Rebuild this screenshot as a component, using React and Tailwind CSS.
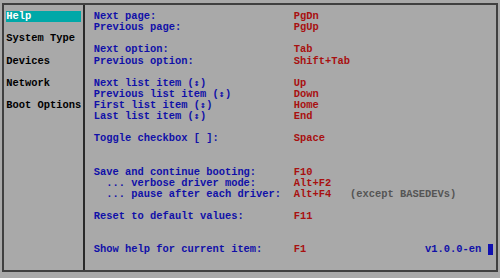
import React from 'react';

const menu = ['Help', '', 'System Type', '', 'Devices', '', 'Network', '', 'Boot Options'];

// each entry is one text row of the help screen (rows 1..21)
const rows = [
  ['Next page:', 'PgDn'],
  ['Previous page:', 'PgUp'],
  null,
  ['Next option:', 'Tab'],
  ['Previous option:', 'Shift+Tab'],
  null,
  ['Next list item (↕)', 'Up'],
  ['Previous list item (↕)', 'Down'],
  ['First list item (↕)', 'Home'],
  ['Last list item (↕)', 'End'],
  null,
  ['Toggle checkbox [ ]:', 'Space'],
  null,
  null,
  ['Save and continue booting:', 'F10'],
  ['  ... verbose driver mode:', 'Alt+F2'],
  ['  ... pause after each driver:', 'Alt+F4', '(except BASEDEVs)'],
  null,
  ['Reset to default values:', 'F11'],
  null,
  null,
];

const Label = ({ text }) => {
  const parts = text.split('↕');
  return (
    <span className="w-[200px] text-[#1010a8]">
      {parts.map((p, i) => (
        <React.Fragment key={i}>
          {p}
          {i < parts.length - 1 && (
            <span className="inline-block align-top w-[6.25px] h-[11.12px] overflow-hidden text-center font-['DejaVu_Sans_Mono',monospace] text-[9.5px] leading-[10.4px]">↕</span>
          )}
        </React.Fragment>
      ))}
    </span>
  );
};

const App = () => {
  return (
    <div className="w-[500px] h-[278px] bg-[#a9a9a9] pt-[3px] pl-[2px] pr-[2px] pb-[6.5px] font-['Liberation_Mono','DejaVu_Sans_Mono',monospace] font-bold text-[10.42px] leading-[11.12px] whitespace-pre">
      <div className="h-full flex border-2 border-[#404040]">
        {/* Sidebar */}
        <div className="w-[79px] pt-[6.12px] pl-[2.25px] text-black">
          {menu.map((item, i) => (
            <div
              key={i}
              className={`h-[11.12px] w-[75px] ${i === 0 ? 'bg-[#00a8a8] text-white' : ''}`}
            >
              {item}
            </div>
          ))}
        </div>

        <div className="w-[2px] bg-[#2a2a2a]" />

        {/* Help content */}
        <div className="flex-1 pt-[6.12px] pl-[8.75px]">
          {rows.map((row, i) => (
            <div key={i} className="h-[11.12px] flex">
              {row && (
                <>
                  <Label text={row[0]} />
                  <span className="w-[56.25px] text-[#a81010]">{row[1]}</span>
                  {row[2] && <span className="text-[#555555]">{row[2]}</span>}
                </>
              )}
            </div>
          ))}
          <div className="h-[11.12px] flex">
            <span className="w-[200px] text-[#1010a8]">Show help for current item:</span>
            <span className="w-[131.25px] text-[#a81010]">F1</span>
            <span className="w-[62.5px] text-[#1010a8]">v1.0.0-en </span>
            <span className="w-[5.5px] h-[11px] bg-[#1010b0]" />
          </div>
        </div>
      </div>
    </div>
  );
};

export default App;
